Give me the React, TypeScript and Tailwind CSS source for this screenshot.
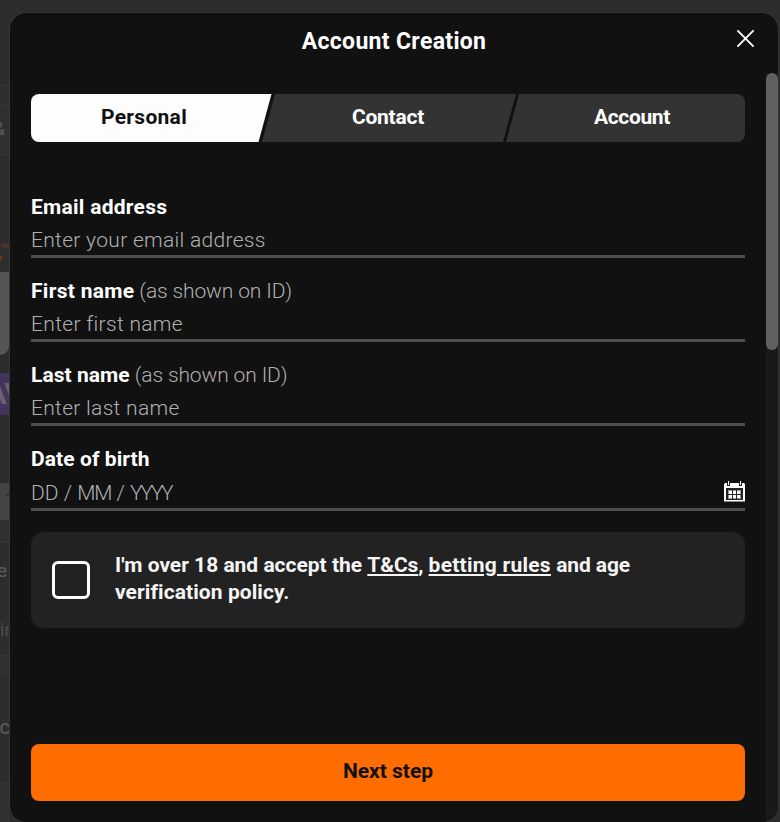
import type { ReactNode } from "react";

function Backdrop() {
  return (
    <div className="w-[10px] shrink-0 overflow-hidden whitespace-nowrap font-['Roboto',sans-serif] text-[#5c5c5c]">
      <div className="h-[85px] bg-[#2c2c2c]" />
      <div className="h-[19px] border-t border-[#353535] bg-[#2e2e2e]" />
      <div className="flex h-[51px] items-center justify-end border-t border-[#363636] bg-[#303030] pr-[5px] pb-[3px] text-[18px] leading-none">&amp;</div>
      <div className="h-[87px] border-t border-[#353535] bg-[#2c2c2c]" />
      <div className="h-[30px] bg-[#2e2e2e] font-bold text-[#6b3826]">
        <div className="flex h-[8px] items-center justify-end text-[6px] leading-none">TM</div>
        <div className="mt-[6px] h-[4px] w-[2px] bg-[#6b3826]" />
      </div>
      <div className="h-[83px] bg-[#2e2e2e]">
        <div className="h-[83px] w-[9px] rounded-br-[14px] bg-[#555555]" />
      </div>
      <div className="h-[18px] bg-[#2c2c2c]" />
      <div className="flex h-[42px] items-center justify-end bg-[#42345f] text-[30px] leading-none font-bold text-[#68666c]">
        <span className="-mr-[13px] tracking-[-1px]">AV</span>
      </div>
      <div className="h-[68px] bg-[#2c2c2c]" />
      <div className="flex h-[37px] items-center bg-[#444444] pl-[4px] text-[21px] text-[#2c2c2c]">1</div>
      <div className="h-[21px] bg-[#303030]" />
      <div className="flex h-[57px] items-center justify-end border-t-2 border-[#353535] bg-[#2d2d2d] pt-[2px] pr-[3px] text-[19px]">e</div>
      <div className="flex h-[57px] items-start bg-[#2d2d2d] pt-5 text-[18px] leading-[24px] text-[#4e4e4e]">in</div>
      <div className="h-[20px] border-t border-[#363636] bg-[#303030]" />
      <div className="flex h-[107px] items-center justify-end border-t border-[#353535] bg-[#2d2d2d] pb-[5px] text-[20px]">c</div>
      <div className="h-[40px] border-t border-[#353535] bg-[#303030]" />
    </div>
  );
}

function Field({ label, labelClass, note, placeholder, placeholderClass, icon }: {
  label: string;
  labelClass: string;
  note?: string;
  placeholder: ReactNode;
  placeholderClass: string;
  icon?: ReactNode;
}) {
  return (
    <div className="border-b-[3px] border-[#4d4d4d] pb-[3px] whitespace-nowrap">
      <div className="flex h-6 leading-6">
        <span className={"font-bold text-white " + labelClass}>{label}</span>
        {note && <span className="ml-[5px] font-light tracking-[-0.13px] text-[#b0b0b0]">{note}</span>}
      </div>
      <div className={icon ? "mt-[10px] flex h-6 items-start justify-between" : "mt-[9px] flex h-6 items-start justify-between"}>
        <span className={"font-light leading-6 text-[#b0b0b0] " + placeholderClass}>{placeholder}</span>
        {icon}
      </div>
    </div>
  );
}

function CalendarIcon() {
  return (
    <svg className="h-[21px] w-[21px]" viewBox="0 0 21 21" shapeRendering="crispEdges">
      <path fill="#fff" d="M0 2h21v19H0z" />
      <path fill="#888" d="M0 2h1v1H0zM20 2h1v1h-1zM0 20h21v1H0z" />
      <path fill="#222" d="M2 7h17v12H2z" />
      <path fill="#222" d="M3 1h3v4H3zM15 1h3v4h-3z" />
      <path fill="#fff" d="M4 0h1v4H4zM16 0h1v4h-1z" />
      <path fill="#999" d="M4 9h4v4H4zM9 9h3v4H9zM13 9h4v4h-4zM4 14h4v4H4zM9 14h3v4H9zM13 14h4v4h-4z" />
      <path fill="#fff" d="M5 10h3v3H5zM9 10h3v3H9zM13 10h3v3h-3zM5 14h3v3H5zM9 14h3v3H9zM13 14h3v3h-3z" />
    </svg>
  );
}

export default function App() {
  return (
    <div className="flex h-[822px] w-[780px] overflow-hidden bg-[#2c2c2c] font-['Roboto',sans-serif] text-[21px]">
      <Backdrop />
      <div className="mt-[13px] flex h-[809px] w-[768px] shrink-0 flex-col overflow-hidden rounded-2xl bg-[#111111] shadow-[0_0_0_1px_#353535]">
        <header className="grid h-[60px] shrink-0 grid-cols-[48px_1fr_48px]">
          <span />
          <h1 className="pt-[15px] text-center text-[23px] leading-7 font-bold tracking-[0.33px] text-white">Account Creation</h1>
          <button className="mt-[16px] ml-[6px] h-[19px] w-[19px]" aria-label="Close">
            <svg className="block h-[19px] w-[19px]" viewBox="0 0 19 19" fill="none" stroke="#fff" strokeWidth="1.9">
              <path d="M1.4 1.4 17.6 17.6M17.6 1.4 1.4 17.6" />
            </svg>
          </button>
        </header>
        <div className="flex min-h-0 flex-1">
          <main className="flex w-[756px] flex-col px-[21px] pt-[21px]">
            <nav className="flex h-12 shrink-0 text-center leading-6 font-bold text-white">
              <div className="w-[241px] rounded-l-lg bg-[#fdfdfd] pt-[11px] pr-[15px] tracking-[0.3px] text-[#111111] [clip-path:polygon(0_0,240.5px_0,227.5px_100%,0_100%)]">Personal</div>
              <div className="-ml-[10px] w-[254px] bg-[#333333] pt-[11px] pr-[2px] tracking-[-0.25px] [clip-path:polygon(13px_0,254px_0,241px_100%,0_100%)]">Contact</div>
              <div className="-ml-[10px] w-[239px] rounded-r-lg bg-[#333333] pt-[11px] pl-[13px] tracking-[-0.38px] [clip-path:polygon(13px_0,100%_0,100%_100%,0_100%)]">Account</div>
            </nav>
            <form className="mt-[53px] flex flex-col gap-[21px]">
              <Field label="Email address" labelClass="tracking-[0.26px]" placeholder="Enter your email address" placeholderClass="tracking-[0.3px]" />
              <Field label="First name" labelClass="tracking-[0.29px]" note="(as shown on ID)" placeholder="Enter first name" placeholderClass="tracking-[0.32px]" />
              <Field label="Last name" labelClass="tracking-[0.05px]" note="(as shown on ID)" placeholder="Enter last name" placeholderClass="tracking-[0.3px]" />
              <Field
                label="Date of birth"
                labelClass="tracking-[0.08px]"
                placeholder={
                  <>
                    <span className="tracking-[0.05px]">DD / </span>
                    <span className="tracking-[-1.2px]">MM</span> / <span className="tracking-[-2.4px]">YYYY</span>
                  </>
                }
                placeholderClass=""
                icon={<CalendarIcon />}
              />
              <div className="flex h-24 items-center rounded-xl bg-[#222222] pl-[21px] text-[#f5f5f5]">
                <span className="h-[38px] w-[38px] shrink-0 rounded-[6px] border-[3px] border-white" />
                <p className="-mt-[3px] ml-[25px] leading-[27px] font-bold whitespace-nowrap">
                  <span className="tracking-[-0.01px]">I'm over 18 and accept the </span>
                  <a className="tracking-[-0.12px] underline decoration-2 underline-offset-2">T&amp;Cs</a>,{" "}
                  <a className="tracking-[0.25px] underline decoration-2 underline-offset-2">betting rules</a>{" "}
                  <span className="tracking-[-0.1px]">and age</span>
                  <br />
                  <span className="tracking-[0.08px]">verification policy.</span>
                </p>
              </div>
            </form>
            <button className="mt-[116px] h-[57px] shrink-0 rounded-lg bg-[#ff6c00] pb-[3px] text-center leading-6 font-bold text-[#111111]">Next step</button>
          </main>
          <div className="w-3 bg-[#191919]">
            <div className="h-[277px] rounded-full bg-[#606060]" />
          </div>
        </div>
      </div>
    </div>
  );
}
